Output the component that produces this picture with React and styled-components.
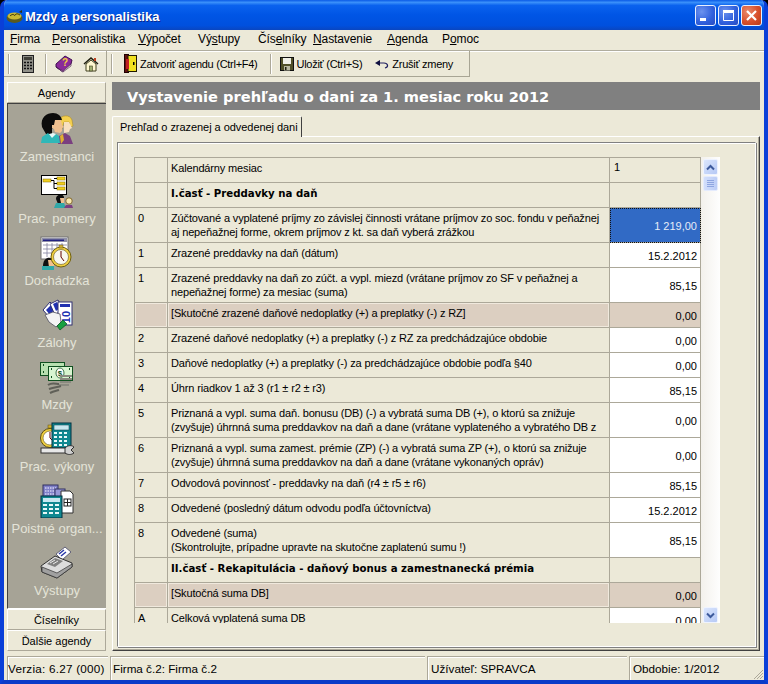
import React from 'react';
import styled, { createGlobalStyle, css } from 'styled-components';

const GlobalStyle = createGlobalStyle`
	html, body { margin: 0; padding: 0; background: #000; }
	* { box-sizing: border-box; }
`;

const ui = `"Liberation Sans", Arial, sans-serif`;
const wide = `"DejaVu Sans", Verdana, sans-serif`;

const Window = styled.div`
	width: 768px;
	height: 684px;
	display: flex;
	flex-direction: column;
	font-family: ${ui};
	font-size: 12px;
	color: #000;
	background: #ece9d8;
	border-left: 4px solid #0a3fd8;
	border-right: 4px solid #0a3fd8;
	border-bottom: 4px solid #0a3bc8;
	border-radius: 7px 7px 0 0;
	overflow: hidden;
`;

const TitleBar = styled.div`
	height: 30px;
	margin: 0 -4px;
	padding: 2px 6px 0;
	display: flex;
	align-items: center;
	flex: none;
	background: linear-gradient(180deg, #0a5ae6 0%, #3a90fa 8%, #0a62ee 18%, #0055e5 50%, #0050de 85%, #0a46c0 100%);
`;

const AppIcon = styled.svg`
	width: 17px;
	height: 17px;
	margin-right: 2px;
	flex: none;
`;

const Title = styled.div`
	font-weight: bold;
	font-size: 13px;
	color: #fff;
	flex: 1;
	text-shadow: 1px 1px #0a2a90;
`;

const CaptionButton = styled.div`
	width: 21px;
	height: 21px;
	margin-left: 2px;
	margin-top: -2px;
	border: 1px solid #e8f0ff;
	border-radius: 3px;
	display: flex;
	align-items: center;
	justify-content: center;
	background: ${(props) => props.close
		? 'radial-gradient(circle at 30% 30%, #ea8a6c, #d8502c 55%, #b83a18)'
		: 'radial-gradient(circle at 30% 30%, #6c92ee, #2f5fdc 60%, #2a4cc0)'};
`;

const MenuBar = styled.div`
	height: 20px;
	flex: none;
	display: flex;
	align-items: center;
	padding: 0 0 2px 6px;
	font-size: 12px;
	letter-spacing: -0.1px;
	u { text-underline-offset: 1px; }
`;

const MenuItem = styled.span`
	width: ${(props) => props.width}px;
	flex: none;
`;

const ToolArea = styled.div`
	height: 27px;
	flex: none;
	display: flex;
	border-top: 1px solid #b0ad9e;
	box-shadow: inset 0 1px #fff;
	font-size: 11px;
	letter-spacing: -0.27px;
`;

const ToolBand = styled.div`
	display: flex;
	align-items: center;
	height: 26px;
	border-right: 1px solid #a8a594;
	border-bottom: 1px solid #a8a594;
	box-shadow: inset 0 1px #fff;
	padding: ${(props) => props.padding || '0'};
	flex: none;
`;

const ToolSep = styled.div`
	width: 2px;
	height: 20px;
	flex: none;
	border-left: 1px solid #aca899;
	border-right: 1px solid #fff;
	margin: ${(props) => props.margin || '0'};
`;

const ToolButton = styled.div`
	display: flex;
	align-items: center;
	gap: 3px;
	margin-right: ${(props) => props.after || 0}px;
	white-space: nowrap;
`;

const ToolIcon = styled.svg`
	width: ${(props) => props.w || 16}px;
	height: ${(props) => props.h || 16}px;
	margin-left: ${(props) => props.before || 0}px;
	flex: none;
`;

const Main = styled.div`
	flex: 1;
	min-height: 0;
	display: flex;
	gap: 6px;
	padding: 5px 4px 5px 3px;
`;

const Sidebar = styled.div`
	width: 99px;
	flex: none;
	display: flex;
	flex-direction: column;
`;

const SideButton = styled.div`
	height: 21px;
	flex: none;
	display: flex;
	align-items: center;
	justify-content: center;
	background: #ece9d8;
	border: 1px solid;
	border-color: #fff #aca899 #aca899 #fff;
	font-size: 11px;
`;

const SidePanel = styled.div`
	flex: 1;
	min-height: 0;
	background: #a6a396;
	border-top: 1px solid #404040;
	border-left: 1px solid #404040;
	border-bottom: 1px solid #fff;
	overflow: hidden;
`;

const SideItem = styled.div`
	height: 62px;
	padding-top: 8px;
	display: flex;
	flex-direction: column;
	align-items: center;
	gap: 3px;
`;

const SideIcon = styled.svg`
	width: 34px;
	height: 34px;
	flex: none;
`;

const SideLabel = styled.div`
	font-size: 13px;
	line-height: 16px;
	white-space: nowrap;
	color: #e4e3d8;
`;

const Content = styled.div`
	flex: 1;
	min-width: 0;
	display: flex;
	flex-direction: column;
`;

const Banner = styled.div`
	height: 28px;
	flex: none;
	background: #808080;
	color: #fff;
	font-family: ${wide};
	font-weight: bold;
	font-size: 14.6px;
	display: flex;
	align-items: center;
	padding-left: 15px;
`;

const Tabs = styled.div`
	margin-top: 6px;
	height: 20px;
	flex: none;
	display: flex;
`;

const Tab = styled.div`
	position: relative;
	z-index: 1;
	height: 21px;
	width: 190px;
	padding-left: 7px;
	display: flex;
	align-items: center;
	white-space: nowrap;
	font-size: 11px;
	letter-spacing: -0.05px;
	background: #ece9d8;
	border-top: 1px solid #fff;
	border-left: 1px solid #fff;
	border-right: 1px solid #404040;
	border-radius: 2px 2px 0 0;
`;

const TabPage = styled.div`
	flex: 1;
	min-height: 0;
	padding: 5px 3px 3px 4px;
	border: 1px solid;
	border-color: #fff #404040 #404040 #fff;
	box-shadow: inset -1px -1px #aca899;
	display: flex;
`;

const Frame = styled.div`
	flex: 1;
	min-width: 0;
	padding: 14px 0 0 16px;
	border: 1px solid;
	border-color: #808080 #fff #fff #808080;
	box-shadow: 1px 1px #808080, inset 1px 1px #fff;
`;

const Viewport = styled.div`
	width: 586px;
	height: 466px;
	display: flex;
	overflow: hidden;
`;

const Grid = styled.div`
	width: 567px;
	border-top: 1px solid #aca899;
	border-left: 1px solid #aca899;
	flex: none;
`;

const Row = styled.div`
	display: grid;
	grid-template-columns: 33px 442px 91px;
	height: ${(props) => props.tall ? 35 : 25}px;
	flex: none;
`;

const Cell = styled.div`
	border-right: 1px solid #aca899;
	border-bottom: 1px solid #aca899;
	background: ${(props) => props.pink ? '#dccfc1' : '#ece9d8'};
	overflow: hidden;
	white-space: nowrap;
	line-height: 14px;
	padding: 3px 0 0 3px;
	font-size: 11px;
	letter-spacing: -0.15px;
	${(props) => props.pink && css`box-shadow: inset 1px 1px #f0e9dd, inset -1px -1px #f0e9dd;`}
	${(props) => props.bold && css`
		font-family: ${wide};
		font-weight: bold;
		font-size: 10.2px;
		letter-spacing: 0;
		padding-top: 4px;
	`}
`;

const ValueCell = styled.div`
	border-right: 1px solid #aca899;
	border-bottom: 1px solid #aca899;
	display: flex;
	align-items: center;
	justify-content: flex-end;
	padding: 1px 3px 0 0;
	font-size: 11px;
	background: #fff;
	${(props) => props.kind === 'pink' && css`background: #dccfc1;`}
	${(props) => props.kind === 'head' && css`
		background: #ece9d8;
		justify-content: flex-start;
		align-items: flex-start;
		padding: 3px 0 0 4px;
	`}
	${(props) => props.kind === 'selected' && css`
		background: #316ac5;
		color: #e6ecf8;
		outline: 1px dotted #111;
		outline-offset: -1px;
	`}
`;

const ScrollBar = styled.div`
	width: 19px;
	flex: none;
	background: linear-gradient(90deg, #f3f1ec, #fefefe);
	padding: 2px 2px 0;
	display: flex;
	flex-direction: column;
`;

const ScrollButton = styled.div`
	height: 16px;
	flex: none;
	border-radius: 2px;
	border: 1px solid #eef3ff;
	background: linear-gradient(135deg, #dbe6fd, #b6c9f5);
	display: flex;
	align-items: center;
	justify-content: center;
`;

const ScrollThumb = styled.div`
	height: 15px;
	margin-top: 1px;
	flex: none;
	border-radius: 2px;
	border: 1px solid #e4ebfd;
	background:
		repeating-linear-gradient(180deg, #8ea5e0 0 1px, transparent 1px 2px) center / 7px 7px no-repeat,
		linear-gradient(90deg, #d2defb, #bccdf6);
`;

const ScrollTrack = styled.div`
	flex: 1;
`;

const StatusBar = styled.div`
	height: 24px;
	flex: none;
	display: flex;
	gap: 2px;
	padding-left: 3px;
	font-size: 11.7px;
`;

const StatusPane = styled.div`
	width: ${(props) => props.width}px;
	flex: ${(props) => props.grow ? 1 : 'none'};
	position: relative;
	display: flex;
	align-items: center;
	padding-left: ${(props) => props.pad}px;
	white-space: nowrap;
	letter-spacing: ${(props) => props.spread || 0}px;
	border-top: 1px solid #aca899;
	border-left: 1px solid #aca899;
	box-shadow: inset 1px 1px #fff;
`;

const Grip = styled.svg`
	position: absolute;
	right: 0;
	bottom: 0;
	width: 12px;
	height: 12px;
`;

const Chevron = ({ down }) => (
	<svg width="9" height="7" viewBox="0 0 9 7">
		<path d={down ? 'M1 1.5l3.5 3.5 3.5-3.5' : 'M1 5.5l3.5-3.5 3.5 3.5'} fill="none" stroke="#3d5a9c" strokeWidth="2" />
	</svg>
);

const icons = {
	people: (
		<>
			<path d="M19 8c2-5 11-6 13 0l1 6-3 1-1-5-5 0-2 7-3-2z" fill="#f4d050" stroke="#a08020" strokeWidth=".5" />
			<path d="M24 10l5 0 2 4 1 2-2 1-1 3-5 1z" fill="#f8e0c0" />
			<path d="M18 32l1-8 6-3 5 3 3 8z" fill="#7a3f80" />
			<path d="M20 24l3-2 1 6-3 4z" fill="#e0b030" />
			<path d="M2 15C0 5 7 1 13 1c5 0 8 3 9 7l-6 1-2 5-2 3v5H6z" fill="#0c0c0c" />
			<path d="M15 8h6l1 5 2 2-2 1v3l-2 2-5-1-1-3-2-1v-3h2z" fill="#f0c090" />
			<path d="M1 31l1-6 6-4 3 3 5-2 3 2 1 7z" fill="#30b8b8" />
			<path d="M9 22l3 4 4-4-3-1z" fill="#e8f8f8" />
		</>
	),
	org: (
		<>
			<rect x="1.5" y="1.5" width="25" height="19" fill="#fff" stroke="#000" />
			<rect x="3" y="5" width="8" height="3" fill="#f0d020" stroke="#806800" strokeWidth=".5" />
			<rect x="17" y="3" width="8" height="3" fill="#f0d020" stroke="#806800" strokeWidth=".5" />
			<rect x="17" y="8" width="8" height="3" fill="#f0d020" stroke="#806800" strokeWidth=".5" />
			<rect x="17" y="13" width="8" height="3" fill="#f0d020" stroke="#806800" strokeWidth=".5" />
			<path d="M11 6.5h3v8h3M14 4.5h3M14 9.5h3" stroke="#000" fill="none" />
			<path d="M16 25c0-5 7-6 8-2v6l-6 1z" fill="#101010" />
			<path d="M20 24h4v5h-3z" fill="#f0c090" />
			<path d="M14 34l2-5h8l2 5z" fill="#30a8a8" />
			<circle cx="29" cy="27" r="3.2" fill="#f8e8b0" stroke="#604000" strokeWidth=".7" />
			<path d="M24 34l2-3h6l1 3z" fill="#7a3f80" />
		</>
	),
	clock: (
		<>
			<rect x="1" y="1" width="27" height="22" fill="#fff" stroke="#707070" />
			<rect x="2" y="2" width="25" height="4" fill="#9090a8" />
			<rect x="3" y="3.5" width="21" height="1.5" fill="#202080" />
			<path d="M3 9h24M3 13h24M3 17h24M7 7v14M12 7v14M17 7v14M22 7v14" stroke="#8080a0" strokeWidth=".8" />
			<path d="M3 30c0-9 8-10 10-6v8l-8 2z" fill="#101010" />
			<path d="M8 24h6v7H9z" fill="#f0c090" />
			<rect x="2" y="30" width="12" height="4" fill="#30a8a8" />
			<circle cx="21" cy="21" r="10" fill="#f0d040" stroke="#706010" />
			<circle cx="21" cy="21" r="7.5" fill="#f8f8f0" stroke="#605020" strokeWidth=".6" />
			<path d="M21 15v6M21 21l3 4" stroke="#600000" />
			<rect x="19" y="9" width="4" height="3" fill="#d0b030" stroke="#605020" strokeWidth=".5" />
		</>
	),
	hand: (
		<>
			<path d="M3 12l7-8 7 7-7 9z" fill="#fff" stroke="#303070" />
			<path d="M6 12l5-5 4 4-5 6z" fill="#2030b0" />
			<path d="M10 6l8-4 5 9-8 6z" fill="#fff" stroke="#303070" />
			<path d="M13 6l4-2 3 6-4 3z" fill="#2030b0" />
			<rect x="18" y="4" width="14" height="23" fill="#fff" stroke="#303070" />
			<rect x="20" y="6" width="10" height="3" fill="#2030b0" />
			<text x="25" y="24" fontFamily="Liberation Sans" fontWeight="bold" fontSize="11" fill="#2030b0" textAnchor="middle" transform="rotate(-90 25 19)">10</text>
			<path d="M5 17l8-3 7 2 1 8-5 5-7-5z" fill="#f4f4f4" stroke="#505060" strokeWidth=".8" />
			<path d="M17 28l6-6 4 4-7 6z" fill="#18a040" stroke="#085020" strokeWidth=".7" />
		</>
	),
	money: (
		<>
			<rect x="0.5" y="2.5" width="24" height="13" fill="#b8e0b0" stroke="#105020" />
			<rect x="8.5" y="6.5" width="24" height="14" fill="#d8f4d0" stroke="#105020" />
			<ellipse cx="20" cy="13" rx="4" ry="5" fill="#fff" stroke="#105020" strokeWidth=".8" />
			<path d="M11 9h1M11 17h1M29 9h1M29 17h1" stroke="#105020" strokeWidth="2" />
			<path d="M3 5h1M3 12h1" stroke="#105020" strokeWidth="2" />
			<text x="20" y="16" fontFamily="Liberation Sans" fontWeight="bold" fontSize="8" fill="#105020" textAnchor="middle">$</text>
			<path d="M20 16h12M20 19h12M20 22h11M19 25h10" stroke="#8a8a80" strokeWidth="2" />
			<path d="M8 25c4-3 8-1 11-1M9 29c5-2 9-2 12-3M10 33c4-2 6-2 9-3" stroke="#606058" strokeWidth="2" fill="none" />
		</>
	),
	calc: (
		<>
			<circle cx="10" cy="16" r="9.5" fill="#f0d040" stroke="#605010" />
			<circle cx="10" cy="16" r="7" fill="#fff" stroke="#605010" strokeWidth=".6" />
			<path d="M10 10v6l3 3" stroke="#600000" fill="none" />
			<rect x="8" y="3" width="5" height="3" fill="#d0b030" stroke="#605010" strokeWidth=".5" />
			<rect x="12" y="1" width="19" height="25" fill="#108890" stroke="#003040" />
			<rect x="14" y="3" width="15" height="5" fill="#c8e8f0" stroke="#003040" strokeWidth=".5" />
			<path d="M14 11h3M19 11h3M24 11h3M14 15h3M19 15h3M24 15h3M14 19h3M19 19h3M24 19h3M14 23h3M19 23h3M24 23h3" stroke="#e8f8f8" strokeWidth="2" />
			<rect x="1" y="26" width="25" height="5" fill="#e8e8e8" stroke="#303030" />
			<path d="M25 26c3-3 7-3 9-1l-3 3 3 3c-3 2-6 2-9 0z" fill="#d0d0d0" stroke="#303030" />
		</>
	),
	office: (
		<>
			<rect x="3" y="1" width="15" height="22" fill="#8080c8" stroke="#303060" />
			<path d="M5 4h11M5 7h11M5 10h11M5 13h11" stroke="#d0d0f0" strokeWidth="1.4" strokeDasharray="1.5 1" />
			<rect x="15" y="5" width="10" height="8" fill="#9898d8" stroke="#303060" />
			<path d="M21 7h9l3 3v19H21z" fill="#fff" stroke="#303030" />
			<rect x="24" y="15" width="7" height="7" fill="#fff" stroke="#202020" />
			<path d="M27.5 15v7M24 18.5h7" stroke="#202020" />
			<rect x="1" y="12" width="21" height="22" fill="#108890" stroke="#003040" />
			<rect x="3" y="14" width="17" height="4" fill="#c8e8f0" />
			<path d="M3 21h4M9 21h4M15 21h4M3 25h4M9 25h4M15 25h4M3 29h4M9 29h4M15 29h4" stroke="#e8f8f8" strokeWidth="2.2" />
		</>
	),
	printer: (
		<>
			<path d="M16 8l9-7 6 5-9 8z" fill="#fff" stroke="#606078" />
			<path d="M19 8l5-4M21 10l5-4" stroke="#2838a8" strokeWidth="1.5" />
			<path d="M1 20l14-10 17 7v4L17 32 2 26z" fill="#dcdcdc" stroke="#303030" />
			<path d="M2 21l15 6 15-9v3L17 32 2 26z" fill="#a0a0a0" stroke="#303030" strokeWidth=".7" />
			<path d="M7 18l8-6 8 3-8 6z" fill="#808080" />
			<path d="M10 17l5-3M13 18l5-3" stroke="#e8e8e8" />
		</>
	)
};

const agendas = [
	{ icon: 'people', label: 'Zamestnanci' },
	{ icon: 'org', label: 'Prac. pomery' },
	{ icon: 'clock', label: 'Dochádzka' },
	{ icon: 'hand', label: 'Zálohy' },
	{ icon: 'money', label: 'Mzdy' },
	{ icon: 'calc', label: 'Prac. výkony' },
	{ icon: 'office', label: 'Poistné organ...' },
	{ icon: 'printer', label: 'Výstupy' }
];

const rows = [
	{ no: '', text: ['Kalendárny mesiac'], value: '1', kind: 'head' },
	{ no: '', text: ['I.časť - Preddavky na daň'], value: '', kind: 'head', bold: true },
	{ no: '0', text: ['Zúčtované a vyplatené príjmy zo závislej činnosti vrátane príjmov zo soc. fondu v peňažnej', 'aj nepeňažnej forme, okrem príjmov z kt. sa daň vyberá zrážkou'], value: '1 219,00', kind: 'selected', tall: true },
	{ no: '1', text: ['Zrazené preddavky na daň (dátum)'], value: '15.2.2012' },
	{ no: '1', text: ['Zrazené preddavky na daň zo zúčt. a vypl. miezd (vrátane príjmov zo SF v peňažnej a', 'nepeňažnej forme) za mesiac (suma)'], value: '85,15', tall: true },
	{ no: '', text: ['[Skutočné zrazené daňové nedoplatky (+) a preplatky (-) z RZ]'], value: '0,00', kind: 'pink' },
	{ no: '2', text: ['Zrazené daňové nedoplatky (+) a preplatky (-) z RZ za predchádzajúce obdobie'], value: '0,00' },
	{ no: '3', text: ['Daňové nedoplatky (+) a preplatky (-) za predchádzajúce obdobie podľa §40'], value: '0,00' },
	{ no: '4', text: ['Úhrn riadkov 1 až 3 (r1 ± r2 ± r3)'], value: '85,15' },
	{ no: '5', text: ['Priznaná a vypl. suma daň. bonusu (DB) (-) a vybratá suma DB (+), o ktorú sa znižuje', '(zvyšuje) úhrnná suma preddavkov na daň a dane (vrátane vyplateného a vybratého DB z'], value: '0,00', tall: true },
	{ no: '6', text: ['Priznaná a vypl. suma zamest. prémie (ZP) (-) a vybratá suma ZP (+), o ktorú sa znižuje', '(zvyšuje) úhrnná suma preddavkov na daň a dane (vrátane vykonaných opráv)'], value: '0,00', tall: true },
	{ no: '7', text: ['Odvodová povinnosť - preddavky na daň (r4 ± r5 ± r6)'], value: '85,15' },
	{ no: '8', text: ['Odvedené (posledný dátum odvodu podľa účtovníctva)'], value: '15.2.2012' },
	{ no: '8', text: ['Odvedené (suma)', '(Skontrolujte, prípadne upravte na skutočne zaplatenú sumu !)'], value: '85,15', tall: true },
	{ no: '', text: ['II.časť - Rekapitulácia - daňový bonus a zamestnanecká prémia'], value: '', kind: 'head', bold: true },
	{ no: '', text: ['[Skutočná suma DB]'], value: '0,00', kind: 'pink' },
	{ no: 'A', text: ['Celková vyplatená suma DB'], value: '0,00' }
];

const App = () => (
	<Window>
		<GlobalStyle />
		<TitleBar>
			<AppIcon viewBox="0 0 17 17">
				<ellipse cx="8.5" cy="10" rx="8" ry="5" fill="#5a5a20" />
				<ellipse cx="8.5" cy="8" rx="7" ry="3.5" fill="#c8b830" />
				<path d="M4 8c2-2 4-2 5 0M9 7c2-2 3-1 5 0" stroke="#302c08" fill="none" />
				<path d="M13 4l3-2v3z" fill="#303010" />
			</AppIcon>
			<Title>Mzdy a personalistika</Title>
			<CaptionButton>
				<svg width="13" height="13" viewBox="0 0 13 13"><rect x="1" y="9" width="6" height="3" fill="#fff" /></svg>
			</CaptionButton>
			<CaptionButton>
				<svg width="13" height="13" viewBox="0 0 13 13"><path d="M1.5 3.5h10v8h-10z" fill="none" stroke="#fff" /><rect x="1" y="1" width="11" height="2.5" fill="#fff" /></svg>
			</CaptionButton>
			<CaptionButton close>
				<svg width="13" height="13" viewBox="0 0 13 13"><path d="M2 2l9 9M11 2l-9 9" stroke="#fff" strokeWidth="2.2" /></svg>
			</CaptionButton>
		</TitleBar>
		<MenuBar>
			<MenuItem width={42}><u>F</u>irma</MenuItem>
			<MenuItem width={86}><u>P</u>ersonalistika</MenuItem>
			<MenuItem width={60}><u>V</u>ýpočet</MenuItem>
			<MenuItem width={60}>Vý<u>s</u>tupy</MenuItem>
			<MenuItem width={55}>Čís<u>e</u>lníky</MenuItem>
			<MenuItem width={74}><u>N</u>astavenie</MenuItem>
			<MenuItem width={55}><u>A</u>genda</MenuItem>
			<MenuItem width={50}>P<u>o</u>moc</MenuItem>
		</MenuBar>
		<ToolArea>
			<ToolBand padding="0 7px 0 4px">
				<ToolSep margin="0 8px 0 0" />
				<ToolIcon viewBox="0 0 16 20" w={20} h={20}>
					<rect x="2.5" y="1.5" width="11" height="17" fill="#909088" stroke="#202020" />
					<rect x="4" y="3" width="8" height="3" fill="#404038" />
					<path d="M4 8.500h2M7 8.500h2M10 8.500h2M4 11.500h2M7 11.500h2M10 11.500h2M4 14.500h2M7 14.500h2M10 14.500h2" stroke="#101010" strokeWidth="1.6" />
				</ToolIcon>
				<ToolSep margin="0 8px 0 7px" />
				<ToolIcon viewBox="0 0 18 18" w={18} h={18}>
					<path d="M1 9L10 1l7 4-1 4-8 8-7-5z" fill="#8a2a9a" stroke="#401050" />
					<path d="M1 12l7 4 8-7v2l-8 6-7-5z" fill="#e8e0d0" stroke="#401050" strokeWidth=".6" />
					<text x="7" y="11" fontFamily="Liberation Sans" fontWeight="bold" fontSize="10" fill="#f0d040">?</text>
				</ToolIcon>
				<ToolIcon viewBox="0 0 16 16" before={10}>
					<path d="M1 8l7-6 7 6" fill="none" stroke="#202010" strokeWidth="1.5" />
					<path d="M3 8l5-4 5 4v7H3z" fill="#fff8d0" stroke="#404020" />
					<rect x="6.500" y="10" width="3" height="5" fill="#a0b070" stroke="#404020" strokeWidth=".6" />
					<rect x="11" y="2" width="2" height="3" fill="#c04020" />
				</ToolIcon>
			</ToolBand>
			<ToolBand padding="0 16px 0 4px">
				<ToolSep margin="0 11px 0 0" />
				<ToolButton after={12}>
					<ToolIcon viewBox="0 0 13 19" w={13} h={19}>
						<rect x="0.500" y="0.500" width="4" height="18" fill="#601010" stroke="#200000" />
						<rect x="4" y="1.500" width="8.500" height="16" fill="#f0e020" stroke="#201800" />
						<rect x="2" y="5" width="3" height="10" fill="#c02020" />
						<rect x="9" y="8" width="1.500" height="3" fill="#000" />
					</ToolIcon>
					Zatvoriť agendu (Ctrl+F4)
				</ToolButton>
				<ToolSep margin="0 8px 0 0" />
				<ToolButton after={13}>
					<ToolIcon viewBox="0 0 14 14" w={14} h={14}>
						<rect x="0.500" y="0.500" width="13" height="13" fill="#505028" stroke="#101010" />
						<rect x="3" y="1" width="8" height="6" fill="#f0f0e8" />
						<rect x="4" y="9" width="6" height="4.500" fill="#b8b8a0" />
						<rect x="5" y="10" width="1.500" height="3" fill="#202010" />
					</ToolIcon>
					Uložiť (Ctrl+S)
				</ToolButton>
				<ToolButton>
					<ToolIcon viewBox="0 0 14 10" w={14} h={10}>
						<path d="M4 4h5c4 0 5 4 1 5" fill="none" stroke="#202060" strokeWidth="1.200" />
						<path d="M0 4l5-3v6z" fill="#101040" />
					</ToolIcon>
					Zrušiť zmeny
				</ToolButton>
			</ToolBand>
		</ToolArea>
		<Main>
			<Sidebar>
				<SideButton>Agendy</SideButton>
				<SidePanel>
					{agendas.map((agenda) => (
						<SideItem key={agenda.label}>
							<SideIcon viewBox="0 0 34 34">{icons[agenda.icon]}</SideIcon>
							<SideLabel>{agenda.label}</SideLabel>
						</SideItem>
					))}
				</SidePanel>
				<SideButton>Číselníky</SideButton>
				<SideButton>Ďalšie agendy</SideButton>
			</Sidebar>
			<Content>
				<Banner>Vystavenie prehľadu o dani za 1. mesiac roku 2012</Banner>
				<Tabs>
					<Tab>Prehľad o zrazenej a odvedenej dani</Tab>
				</Tabs>
				<TabPage>
					<Frame>
						<Viewport>
							<Grid>
								{rows.map((row, index) => (
									<Row key={index} tall={row.tall}>
										<Cell pink={row.kind === 'pink'}>{row.no}</Cell>
										<Cell pink={row.kind === 'pink'} bold={row.bold}>
											{row.text.map((line) => <div key={line}>{line}</div>)}
										</Cell>
										<ValueCell kind={row.kind}>{row.value}</ValueCell>
									</Row>
								))}
							</Grid>
							<ScrollBar>
								<ScrollButton><Chevron /></ScrollButton>
								<ScrollThumb />
								<ScrollTrack />
								<ScrollButton><Chevron down /></ScrollButton>
							</ScrollBar>
						</Viewport>
					</Frame>
				</TabPage>
			</Content>
		</Main>
		<StatusBar>
			<StatusPane width={101} pad={0} spread={0.25}>Verzia: 6.27 (000)</StatusPane>
			<StatusPane width={315} pad={2}>Firma č.2: Firma č.2</StatusPane>
			<StatusPane width={200} pad={3}>Užívateľ: SPRAVCA</StatusPane>
			<StatusPane grow pad={3}>
				Obdobie: 1/2012
				<Grip viewBox="0 0 12 12">
					<path d="M11 2L2 11M11 5l-6 6M11 8l-3 3" stroke="#aca899" />
				</Grip>
			</StatusPane>
		</StatusBar>
	</Window>
);

export default App;
